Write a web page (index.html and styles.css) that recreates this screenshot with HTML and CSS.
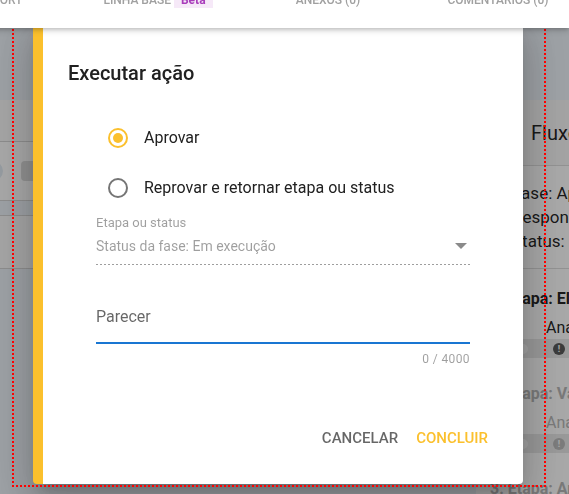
FILE: index.html
```html
<!DOCTYPE html>
<html lang="pt-BR">
<head>
<meta charset="utf-8">
<title>Executar ação</title>
<link rel="stylesheet" href="styles.css">
</head>
<body>
<div class="app">
  <nav class="tabs">
    <div class="tab tab-first">TRANSPORT</div>
    <div class="tab">LINHA BASE <span class="badge">Beta</span></div>
    <div class="tab">ANEXOS (0)</div>
    <div class="tab">COMENTÁRIOS (0)</div>
  </nav>
  <main class="content">
    <section class="left-col">
      <div class="panel">
        <div class="panel-head"></div>
        <div class="panel-filters">
          <span class="chip-dot"></span>
          <span class="chip-btn"></span>
        </div>
      </div>
      <div class="panel panel-card"></div>
    </section>
    <aside class="flow">
      <h2 class="flow-title">Fluxo</h2>
      <div class="flow-info">
        <p>Fase: Aprovação</p>
        <p>Responsável: Ana</p>
        <p>Status: Em execução</p>
      </div>
      <div class="flow-steps">
        <div class="step">
          <div class="step-name">1. Etapa: Elaboração</div>
          <div class="step-user">Ana</div>
          <div class="step-bar"><span class="dot"></span><span class="alert">!</span></div>
        </div>
        <div class="step step-muted">
          <div class="step-name">2. Etapa: Validação</div>
          <div class="step-user">Ana</div>
          <div class="step-bar"><span class="dot"></span><span class="alert">!</span></div>
        </div>
        <div class="step step-muted">
          <div class="step-name">3. Etapa: Aprovação</div>
        </div>
      </div>
    </aside>
  </main>
</div>

<div class="scrim"></div>

<div class="dialog" role="dialog" aria-labelledby="dlg-title">
  <h1 class="dialog-title" id="dlg-title">Executar ação</h1>
  <form class="form">
    <label class="radio-row">
      <svg class="radio radio-on" width="24" height="24" viewBox="0 0 24 24" aria-hidden="true">
        <circle cx="12" cy="12" r="9" fill="none" stroke="currentColor" stroke-width="2"/>
        <circle cx="12" cy="12" r="5" fill="currentColor"/>
      </svg>
      <span class="radio-label">Aprovar</span>
    </label>
    <label class="radio-row">
      <svg class="radio radio-off" width="24" height="24" viewBox="0 0 24 24" aria-hidden="true">
        <circle cx="12" cy="12" r="9" fill="none" stroke="currentColor" stroke-width="2"/>
      </svg>
      <span class="radio-label">Reprovar e retornar etapa ou status</span>
    </label>

    <div class="select">
      <div class="select-label">Etapa ou status</div>
      <div class="select-value">
        <span>Status da fase: Em execução</span>
        <svg class="select-arrow" width="12" height="6" viewBox="0 0 12 6" aria-hidden="true">
          <path d="M0 0 L12 0 L6 6 Z" fill="currentColor"/>
        </svg>
      </div>
      <div class="select-line"></div>
    </div>

    <div class="textarea">
      <div class="textarea-label">Parecer</div>
    </div>
    <div class="counter">0 / 4000</div>
  </form>
  <div class="actions">
    <button type="button" class="btn btn-cancel">CANCELAR</button>
    <button type="button" class="btn btn-ok">CONCLUIR</button>
  </div>
</div>

<div class="focus-frame"></div>
</body>
</html>
```

FILE: styles.css
```css
* { box-sizing: border-box; }

html, body {
  margin: 0;
  height: 100%;
}

body {
  font-family: Roboto, "Noto Sans", "Liberation Sans", sans-serif;
  background: #eef4fa;
  color: rgba(0, 0, 0, 0.87);
  overflow: hidden;
}

/* ---------- background page ---------- */
.app {
  min-height: 100%;
  display: flex;
  flex-direction: column;
}

.tabs {
  position: relative;
  z-index: 1;
  height: 28px;
  background: #fff;
  display: flex;
  align-items: flex-start;
  margin-left: -97px;
  box-shadow: 0 2px 4px -1px rgba(0,0,0,.2), 0 4px 5px 0 rgba(0,0,0,.1);
}

.tab {
  flex: none;
  width: 170px;
  margin-top: -8px;
  display: flex;
  justify-content: center;
  align-items: center;
  gap: 3px;
  font: 500 12px/16px Roboto, sans-serif;
  color: #a0a0a0;
  white-space: nowrap;
}

.badge {
  padding: 0 7px;
  background: #f6e9f8;
  color: #a93dbb;
  font-weight: 700;
}

.content {
  flex: 1;
  display: flex;
  padding-top: 72px;
}

.left-col {
  flex: 1;
  display: flex;
  flex-direction: column;
}

.panel { background: #fff; }

.panel-head {
  height: 42px;
  background: #fbfbfb;
  border-bottom: 1px solid #d6d6d6;
}

.panel-filters {
  height: 59px;
  display: flex;
  align-items: center;
  border-bottom: 1px solid #d6d6d6;
}

.chip-dot {
  width: 20px;
  height: 20px;
  margin-left: -17px;
  border-radius: 50%;
  background: #e4edf5;
}

.chip-btn {
  width: 80px;
  height: 20px;
  margin-left: 18px;
  border-radius: 4px;
  background: #dcdcdc;
}

.panel-card {
  margin-top: 14px;
  height: 54px;
  border-top: 1px solid #d6d6d6;
  border-bottom: 1px solid #d6d6d6;
  background: #fbfbfb;
}

.flow {
  flex: none;
  width: 93px;
  background: #fff;
  white-space: nowrap;
  overflow: hidden;
}

.flow-title {
  margin: 0;
  height: 66px;
  display: flex;
  align-items: center;
  padding-left: 55px;
  background: #f8f8f8;
  border-bottom: 1px solid #dedede;
  font: 400 20px/24px Roboto, sans-serif;
}

.flow-info {
  padding: 15px 0 15px 36px;
  border-bottom: 1px solid #dedede;
  font-size: 17px;
  line-height: 24px;
}

.flow-info p { margin: 0; }

.flow-steps { padding-top: 18px; }

.step {
  padding-left: 14px;
  margin-bottom: 24px;
}

.step-name {
  font: 700 16px/24px Roboto, sans-serif;
}

.step-user {
  margin-top: 6px;
  padding-left: 56px;
  font-size: 16px;
  line-height: 22px;
}

.step-bar {
  margin-left: 22px;
  height: 19px;
  display: flex;
  align-items: center;
  background: #e8e8e8;
}

.dot {
  width: 10px;
  height: 10px;
  margin-left: 6px;
  border-radius: 50%;
  background: #f8f8f8;
}

.alert {
  width: 12px;
  height: 12px;
  margin-left: 25px;
  border-radius: 50%;
  background: #5a5a5a;
  color: #fff;
  font: 700 9px/12px Roboto, sans-serif;
  text-align: center;
}

.step-muted { color: #b8b8b8; }
.step-muted .alert { background: #bcbcbc; }

/* ---------- modal ---------- */
.scrim {
  position: fixed;
  inset: 0;
  background: rgba(0, 0, 0, 0.34);
}

.dialog {
  position: fixed;
  left: 33px;
  top: 16px;
  width: 490px;
  background: #fff;
  border-left: 10px solid #fbc02d;
  border-radius: 4px;
  box-shadow: 0 11px 15px -7px rgba(0,0,0,.2),
              0 24px 38px 3px rgba(0,0,0,.14),
              0 9px 46px 8px rgba(0,0,0,.12);
}

.dialog-title {
  margin: 41px 0 0;
  padding-left: 25px;
  font: 500 20px/32px Roboto, sans-serif;
  color: #212121;
}

.form {
  margin: 37px 53px 0;
}

.radio-row {
  display: flex;
  align-items: center;
  height: 24px;
  margin-left: 10px;
}

.radio-row + .radio-row { margin-top: 26px; }

.radio { flex: none; display: block; }
.radio-on { color: #fbc02d; }
.radio-off { color: #757575; }

.radio-label {
  margin-left: 14px;
  font-size: 16px;
  line-height: 24px;
  color: #212121;
}

.select { margin-top: 15px; }

.select-label {
  font-size: 13px;
  line-height: 16px;
  color: rgba(0, 0, 0, 0.38);
}

.select-value {
  margin-top: 5px;
  height: 20px;
  display: flex;
  align-items: center;
  justify-content: space-between;
  font-size: 14px;
  line-height: 20px;
  color: rgba(0, 0, 0, 0.38);
}

.select-arrow {
  margin-right: 3px;
  color: #8a8a8a;
}

.select-line {
  margin-top: 8px;
  height: 1px;
  background: repeating-linear-gradient(to right,
              rgba(0,0,0,.38) 0, rgba(0,0,0,.38) 2px,
              transparent 2px, transparent 4px);
}

.textarea {
  margin-top: 40px;
  padding-bottom: 13px;
  border-bottom: 2px solid #1976d2;
}

.textarea-label {
  font-size: 16px;
  line-height: 24px;
  color: rgba(0, 0, 0, 0.6);
}

.counter {
  margin-top: 7px;
  text-align: right;
  font-size: 12px;
  line-height: 16px;
  letter-spacing: 0.4px;
  color: rgba(0, 0, 0, 0.38);
}

.actions {
  display: flex;
  justify-content: flex-end;
  gap: 2px;
  margin-top: 53px;
  padding: 0 27px 28px 0;
}

.btn {
  height: 36px;
  padding: 0 8px;
  border: 0;
  background: none;
  font: 500 15px/36px Roboto, sans-serif;
  cursor: pointer;
}

.btn-cancel { color: rgba(0, 0, 0, 0.6); }
.btn-ok { color: #fbc02d; }

/* annotation frame: square 2px dots */
.focus-frame {
  position: fixed;
  left: 12px;
  top: 9px;
  width: 534px;
  height: 478px;
  pointer-events: none;
  background:
    repeating-linear-gradient(to right, #f00 0 2px, transparent 2px 4px) left top / 100% 2px no-repeat,
    repeating-linear-gradient(to right, #f00 0 2px, transparent 2px 4px) left bottom / 100% 2px no-repeat,
    repeating-linear-gradient(to bottom, #f00 0 2px, transparent 2px 4px) left top / 2px 100% no-repeat,
    repeating-linear-gradient(to bottom, #f00 0 2px, transparent 2px 4px) right top / 2px 100% no-repeat;
}
```
